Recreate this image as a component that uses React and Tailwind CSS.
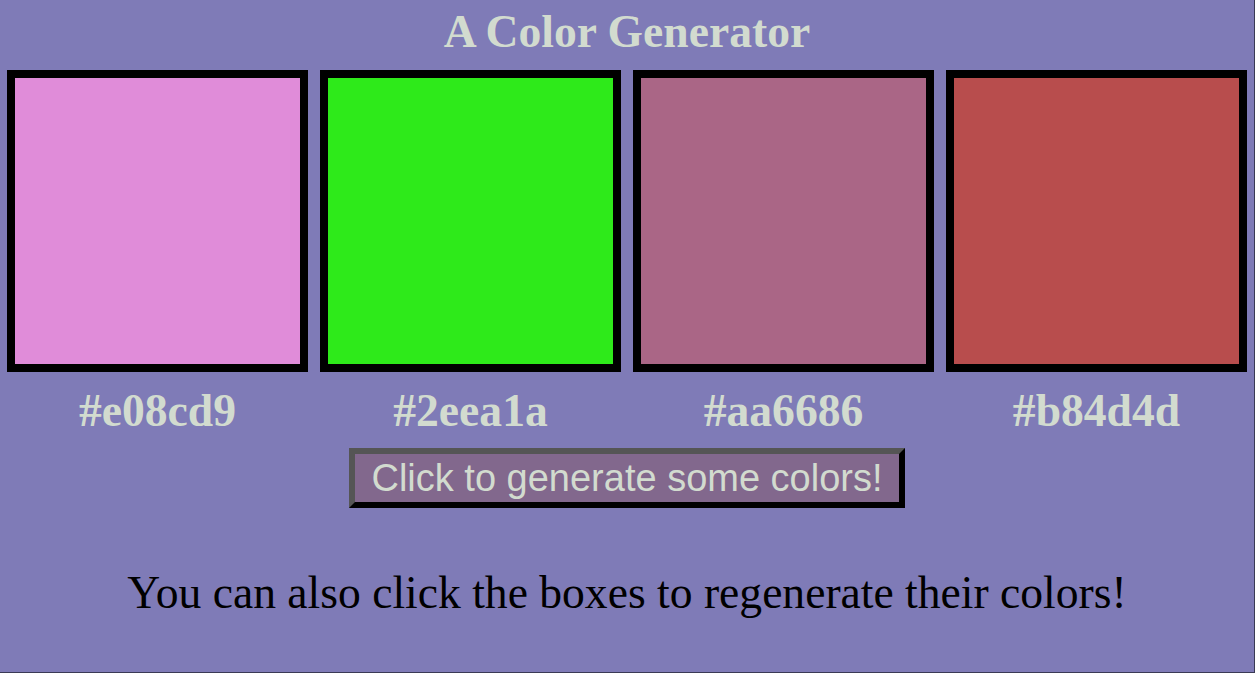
import React from "react";

const colors = ["#e08cd9", "#2eea1a", "#aa6686", "#b84d4d"];

export default function App() {
  return (
    <div
      className="w-full h-[673px] bg-[#7f7bb7] border-r border-b border-[#3a3a55] overflow-hidden"
      style={{ fontFamily: '"Liberation Serif", "Times New Roman", serif' }}
    >
      <h1 className="pt-[6px] text-center text-[45.6px] leading-[52px] font-bold text-[#d2dbcf]">
        A Color Generator
      </h1>
      <div className="mt-[12px] flex gap-[12px] px-[7px]">
        {colors.map((c) => (
          <div key={c} className="flex-1 flex flex-col items-center">
            <div
              className="w-full h-[302px] border-[8px] border-black cursor-pointer"
              style={{ backgroundColor: c }}
            />
            <div className="mt-[13px] text-[45.6px] leading-[52px] font-bold text-[#d2dbcf]">
              {c}
            </div>
          </div>
        ))}
      </div>
      <div className="mt-[11px] flex justify-center">
        <button
          className="w-[556px] h-[60px] bg-[#82688d] border-[6px] border-t-[#555555] border-l-[#555555] border-r-black border-b-black text-[38px] leading-[48px] text-[#d2dbcf] text-center"
          style={{ fontFamily: '"Liberation Sans", Arial, sans-serif' }}
        >
          Click to generate some colors!
        </button>
      </div>
      <p className="mt-[59px] text-center text-[45.6px] leading-[52px] text-black">
        You can also click the boxes to regenerate their colors!
      </p>
    </div>
  );
}
